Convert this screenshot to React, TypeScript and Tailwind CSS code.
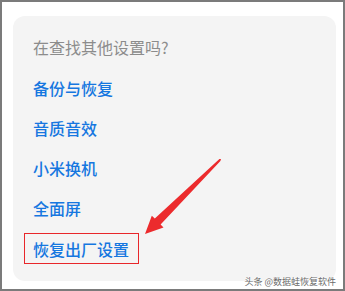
const items = ['备份与恢复', '音质音效', '小米换机', '全面屏'];

const font = { fontFamily: '"Noto Sans CJK SC", "Noto Sans", sans-serif' };

export default function App() {
  return (
    <div className="relative w-[345px] h-[291px] bg-white border-2 border-[#7b7b7b] overflow-hidden" style={font}>
      <div className="ml-[11px] mt-[14px] w-[323px] h-[265px] rounded-xl bg-[#f4f4f4] pl-5 pt-[21px]">
        <div className="h-5 leading-5 text-[16px] text-[#8c8c8c]">在查找其他设置吗?</div>
        <div className="mt-[11px] flex flex-col">
          {items.map((t) => (
            <div key={t} className="h-10 flex items-center text-[16px] font-medium text-[#1677e0]">
              {t}
            </div>
          ))}
          <div className="h-10 flex items-center">
            <span className="-ml-[9px] h-[31px] pl-2 pr-[9px] pt-[2px] flex items-center border border-[#e8262a] text-[16px] font-medium text-[#1677e0]">
              恢复出厂设置
            </span>
          </div>
        </div>
      </div>

      {/* annotation arrow */}
      <svg className="absolute left-0 top-0" width="345" height="291" viewBox="0 0 345 291">
        <polygon
          points="219,157 218.4,159 158.6,222.4 161.5,225.5 143,232 149.8,213.8 152.8,216.6 217.4,157"
          fill="#ec2b2d"
        />
      </svg>

      <div
        className="absolute right-[7px] bottom-[1px] text-[9px] leading-3 text-[#6a6a6a]"
        style={{ textShadow: '0 0 2px #fff, 0 0 2px #fff' }}
      >
        头条 @数据蛙恢复软件
      </div>
    </div>
  );
}
